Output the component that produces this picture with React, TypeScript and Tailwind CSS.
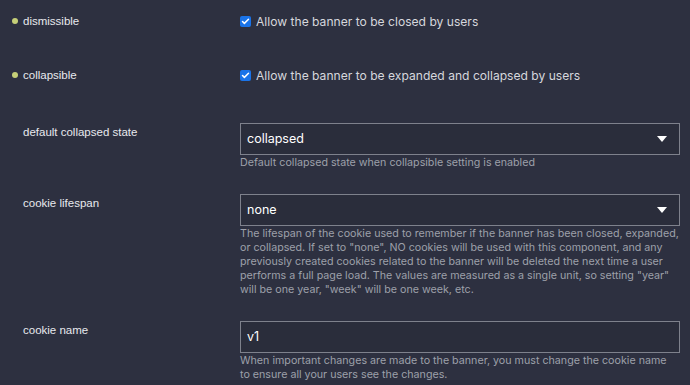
import { Check } from 'lucide-react';

const poppins = "font-['Inter','Open_Sans',sans-serif]";
const arial = "font-['Liberation_Sans',Arial,sans-serif]";

function Caret() {
  return (
    <svg width="10" height="6" viewBox="0 0 10 6" className="shrink-0">
      <path d="M0 0h10L5 6z" fill="#ffffff" />
    </svg>
  );
}

function CheckRow({ label, text }: { label: string; text: string }) {
  return (
    <div className="grid h-[20px] grid-cols-[217px_440px] items-center">
      <div className={`relative text-[11.5px] text-[#e8e9ee] ${arial}`}>
        <span className="absolute -left-[11px] top-[5px] h-[6px] w-[6px] rounded-full bg-[#c5cf78]" />
        {label}
      </div>
      <label className={`flex items-center gap-[5px] text-[12.1px] text-[#d6d7dd] ${poppins}`}>
        <span className="flex h-[11px] w-[11px] items-center justify-center rounded-[2px] bg-[#1a73e8]">
          <Check className="h-[9px] w-[9px] text-white" strokeWidth={4} />
        </span>
        {text}
      </label>
    </div>
  );
}

function Field({
  label,
  value,
  select,
  help,
}: {
  label: string;
  value: string;
  select?: boolean;
  help: string[];
}) {
  return (
    <div className="grid grid-cols-[217px_440px]">
      <div className={`pt-[1px] text-[11.5px] leading-[16px] text-[#e8e9ee] ${arial}`}>{label}</div>
      <div>
        <div
          className={`flex h-[32px] items-center justify-between border border-[#7e818c] bg-[#2a2d3b] pl-[6px] pr-[12px] text-[12.5px] text-white ${poppins}`}
        >
          <span>{value}</span>
          {select && <Caret />}
        </div>
        <div className={`mt-[1px] whitespace-nowrap text-[10.7px] leading-[14px] text-[#9da0aa] ${poppins}`}>
          {help.map((l) => (
            <div key={l}>{l}</div>
          ))}
        </div>
      </div>
    </div>
  );
}

export default function App() {
  return (
    <div className="min-h-[385px] w-[690px] overflow-hidden bg-[#2d3040] pl-[23px] pt-[12px]">
      <CheckRow label="dismissible" text="Allow the banner to be closed by users" />
      <div className="mt-[34px]">
        <CheckRow label="collapsible" text="Allow the banner to be expanded and collapsed by users" />
      </div>
      <div className="mt-[37px]">
        <Field
          label="default collapsed state"
          value="collapsed"
          select
          help={['Default collapsed state when collapsible setting is enabled']}
        />
      </div>
      <div className="mt-[24px]">
        <Field
          label="cookie lifespan"
          value="none"
          select
          help={[
            'The lifespan of the cookie used to remember if the banner has been closed, expanded,',
            'or collapsed. If set to "none", NO cookies will be used with this component, and any',
            'previously created cookies related to the banner will be deleted the next time a user',
            'performs a full page load. The values are measured as a single unit, so setting "year"',
            'will be one year, "week" will be one week, etc.',
          ]}
        />
      </div>
      <div className="mt-[24px]">
        <Field
          label="cookie name"
          value="v1"
          help={[
            'When important changes are made to the banner, you must change the cookie name',
            'to ensure all your users see the changes.',
          ]}
        />
      </div>
    </div>
  );
}
